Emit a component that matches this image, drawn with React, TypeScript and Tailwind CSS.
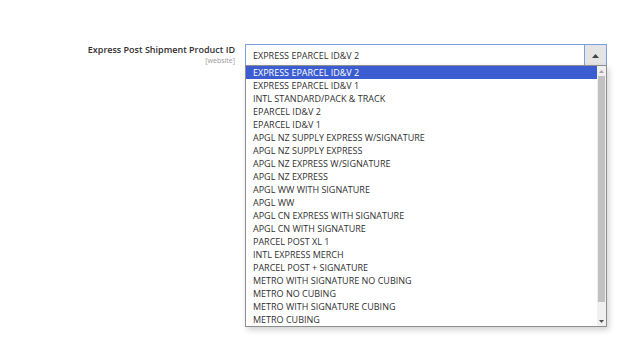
import React from "react";

const options = [
  "EXPRESS EPARCEL ID&V 2",
  "EXPRESS EPARCEL ID&V 1",
  "INTL STANDARD/PACK & TRACK",
  "EPARCEL ID&V 2",
  "EPARCEL ID&V 1",
  "APGL NZ SUPPLY EXPRESS W/SIGNATURE",
  "APGL NZ SUPPLY EXPRESS",
  "APGL NZ EXPRESS W/SIGNATURE",
  "APGL NZ EXPRESS",
  "APGL WW WITH SIGNATURE",
  "APGL WW",
  "APGL CN EXPRESS WITH SIGNATURE",
  "APGL CN WITH SIGNATURE",
  "PARCEL POST XL 1",
  "INTL EXPRESS MERCH",
  "PARCEL POST + SIGNATURE",
  "METRO WITH SIGNATURE NO CUBING",
  "METRO NO CUBING",
  "METRO WITH SIGNATURE CUBING",
  "METRO CUBING",
];

const App: React.FC = () => {
  return (
    <main
      className="w-[624px] h-[360px] bg-white overflow-hidden text-[#303030]"
      style={{ fontFamily: '"Open Sans", "Liberation Sans", sans-serif' }}
    >
      <div className="flex pt-[44px]">
        <div className="w-[236px] pr-[1px] pt-[0px] text-right leading-none">
          <div className="text-[9px] font-semibold text-[#303030] leading-[12px]">
            Express Post Shipment Product ID
          </div>
          <div className="text-[7px] text-[#999] leading-[9px]">[website]</div>
        </div>

        <div className="relative ml-[9px] w-[362px]">
          <div className="flex h-[23px] border border-[#7c9fe0] bg-white">
            <div className="flex-1 pl-[7px] text-[9px] leading-[21px] text-[#303030]">
              EXPRESS EPARCEL ID&amp;V 2
            </div>
            <div className="w-[22px] flex items-center justify-center bg-[#e4e4e4] border-l border-[#7c9fe0]">
              <svg width="7" height="4" viewBox="0 0 7 4">
                <path d="M0 4 L3.5 0 L7 4 Z" fill="#444" />
              </svg>
            </div>
          </div>

          <div className="absolute left-0 top-[21px] w-[362px] flex border border-[#8e8e8e] bg-white shadow-[2px_3px_6px_rgba(0,0,0,0.18)]">
            <ul className="flex-1">
              {options.map((o, i) => (
                <li
                  key={o}
                  className={
                    "h-[13px] pl-[7px] text-[9px] leading-[13px] whitespace-nowrap " +
                    (i === 0 ? "bg-[#3b5dd1] text-white" : "text-[#303030]")
                  }
                >
                  {o}
                </li>
              ))}
            </ul>
            <div className="w-[9px] flex flex-col bg-[#f0f0f0]">
              <div className="h-[10px] flex items-center justify-center">
                <svg width="5" height="3" viewBox="0 0 5 3">
                  <path d="M0 3 L2.5 0 L5 3 Z" fill="#a3a3a3" />
                </svg>
              </div>
              <div className="mx-[1px] h-[226px] bg-[#c1c1c1]" />
              <div className="flex-1 flex items-end justify-center pb-[3px]">
                <svg width="5" height="3" viewBox="0 0 5 3">
                  <path d="M0 0 L2.5 3 L5 0 Z" fill="#505050" />
                </svg>
              </div>
            </div>
          </div>
        </div>
      </div>
    </main>
  );
};

export default App;
